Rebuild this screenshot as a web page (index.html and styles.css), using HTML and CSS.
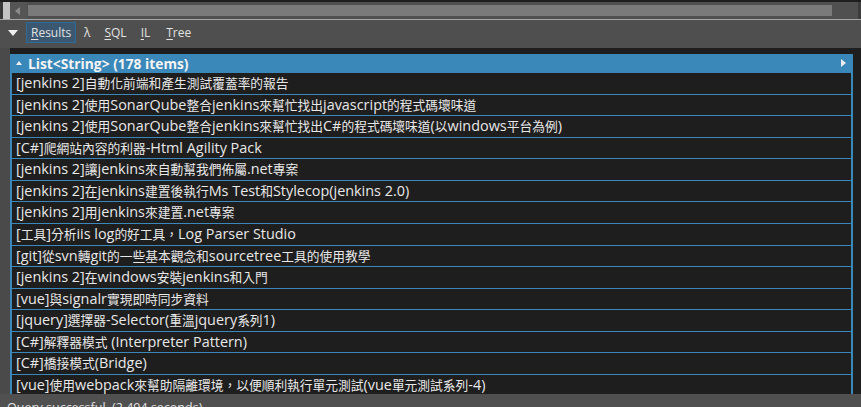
FILE: index.html
```html
<!DOCTYPE html>
<html>
<head>
<meta charset="utf-8">
<link rel="stylesheet" href="styles.css">
</head>
<body>
<div class="topstrip"></div>
<div class="hscroll">
  <div class="m-dark"></div>
  <div class="m-light"></div>
  <div class="arrowbtn"><span class="larrow"></span></div>
  <div class="track"><div class="thumb"></div></div>
  <div class="m-end"></div>
</div>
<div class="sep"></div>
<div class="toolbar">
  <span class="collapse"></span>
  <span class="btn-sel"><u>R</u>esults</span>
  <span class="tab t-lambda">λ</span>
  <span class="tab"><u>S</u>QL</span>
  <span class="tab"><u>I</u>L</span>
  <span class="tab t-tree"><u>T</u>ree</span>
</div>
<div class="main">
  <div class="leftstrip"></div>
  <div class="content">
    <div class="list">
      <div class="header">
        <span class="up"></span>
        <span class="htitle">List&lt;String&gt; (178 items)</span>
        <span class="right"></span>
      </div>
      <div class="row">[jenkins 2]<span class="c">自動化前端和產生測試覆蓋率的報告</span></div>
      <div class="row">[jenkins 2]<span class="c">使用</span>SonarQube<span class="c">整合</span>jenkins<span class="c">來幫忙找出</span>javascript<span class="c">的程式碼壞味道</span></div>
      <div class="row">[jenkins 2]<span class="c">使用</span>SonarQube<span class="c">整合</span>jenkins<span class="c">來幫忙找出</span>C#<span class="c">的程式碼壞味道</span>(<span class="c">以</span>windows<span class="c">平台為例</span>)</div>
      <div class="row">[C#]<span class="c">爬網站內容的利器</span>-Html Agility Pack</div>
      <div class="row">[jenkins 2]<span class="c">讓</span>jenkins<span class="c">來自動幫我們佈屬</span>.net<span class="c">專案</span></div>
      <div class="row">[jenkins 2]<span class="c">在</span>jenkins<span class="c">建置後執行</span>Ms Test<span class="c">和</span>Stylecop(jenkins 2.0)</div>
      <div class="row">[jenkins 2]<span class="c">用</span>jenkins<span class="c">來建置</span>.net<span class="c">專案</span></div>
      <div class="row">[<span class="c">工具</span>]<span class="c">分析</span>iis log<span class="c">的好工具，</span>Log Parser Studio</div>
      <div class="row">[git]<span class="c">從</span>svn<span class="c">轉</span>git<span class="c">的一些基本觀念和</span>sourcetree<span class="c">工具的使用教學</span></div>
      <div class="row">[jenkins 2]<span class="c">在</span>windows<span class="c">安裝</span>jenkins<span class="c">和入門</span></div>
      <div class="row">[vue]<span class="c">與</span>signalr<span class="c">實現即時同步資料</span></div>
      <div class="row">[jquery]<span class="c">選擇器</span>-Selector(<span class="c">重溫</span>jquery<span class="c">系列</span>1)</div>
      <div class="row">[C#]<span class="c">解釋器模式</span> (Interpreter Pattern)</div>
      <div class="row">[C#]<span class="c">橋接模式</span>(Bridge)</div>
      <div class="row">[vue]<span class="c">使用</span>webpack<span class="c">來幫助隔離環境，以便順利執行單元測試</span>(vue<span class="c">單元測試系列</span>-4)</div>
    </div>
  </div>
</div>
<div class="status">Query successful&nbsp; (2.494 seconds)</div>
</body>
</html>
```

FILE: styles.css
```css
html, body {
  margin: 0;
  padding: 0;
}
body {
  width: 861px;
  height: 407px;
  overflow: hidden;
  background: #1e1e1e;
  font-family: "Open Sans", "Noto Sans CJK TC", sans-serif;
  color: #e6e6e6;
  display: flex;
  flex-direction: column;
}
.topstrip {
  height: 2px;
  background: #1e1e1e;
  flex: none;
}
.hscroll {
  height: 17px;
  flex: none;
  display: flex;
  background: #505050;
}
.m-dark {
  width: 3px;
  background: #3a3a3a;
}
.m-light {
  width: 7px;
  background: #c4c4c4;
}
.arrowbtn {
  width: 17px;
  background: #555555;
  display: flex;
  align-items: center;
  justify-content: center;
}
.larrow {
  width: 0;
  height: 0;
  border-top: 4px solid transparent;
  border-bottom: 4px solid transparent;
  border-right: 5px solid #8c8c8c;
  margin-left: -2px;
}
.track {
  flex: 1;
  padding: 3px 0 3px 1px;
  display: flex;
}
.thumb {
  width: 804px;
  background: #7a7a7a;
}
.m-end {
  width: 3px;
  background: #3c3c3c;
}
.sep {
  height: 1px;
  flex: none;
  background: #a6a6a6;
}
.toolbar {
  height: 28px;
  flex: none;
  background: #4f4f4f;
  display: flex;
  align-items: flex-start;
  padding-top: 2px;
  box-sizing: border-box;
  font-size: 12px;
  color: #e2e2e2;
}
.collapse {
  width: 0;
  height: 0;
  margin: 8px 0 0 8px;
  border-left: 5px solid transparent;
  border-right: 5px solid transparent;
  border-top: 6px solid #f0f0f0;
}
.btn-sel {
  margin-left: 8px;
  height: 21px;
  box-sizing: border-box;
  padding: 0 4px;
  width: 50px;
  line-height: 19px;
  background: #3c5870;
  border: 1px solid #2c6a98;
}
.tab {
  margin-left: 14px;
  line-height: 21px;
}
.t-lambda {
  margin-left: 8px;
}
.t-tree {
  margin-left: 16px;
}
u {
  text-underline-offset: 2px;
}
.main {
  height: 346px;
  flex: none;
  display: flex;
  overflow: hidden;
}
.leftstrip {
  width: 10px;
  flex: none;
  background: #4a4a4a;
}
.content {
  flex: 1;
  padding: 6px 8px 0 0;
  min-width: 0;
}
.list {
  background: #3a88b9;
  padding: 0 2px;
  display: flex;
  flex-direction: column;
  gap: 1px;
}
.header {
  height: 18px;
  margin: 0 -2px;
  display: flex;
  align-items: center;
  padding-left: 6px;
  font-weight: bold;
  font-size: 13.8px;
  color: #f4f4f4;
}
.up {
  width: 0;
  height: 0;
  border-left: 3px solid transparent;
  border-right: 3px solid transparent;
  border-bottom: 4px solid #f0f0f0;
  margin-right: 6px;
}
.htitle {
  flex: 1;
}
.right {
  width: 0;
  height: 0;
  border-top: 4px solid transparent;
  border-bottom: 4px solid transparent;
  border-left: 5px solid #eeeeee;
  margin-right: 7px;
}
.row {
  height: 20.57px;
  line-height: 20.57px;
  background: #1e1e1e;
  padding-left: 4px;
  font-size: 14.4px;
  white-space: nowrap;
  color: #e8e8e8;
  flex: none;
}
.c {
  font-size: 0.885em;
}
.status {
  flex: 1;
  background: #505050;
  font-size: 12.5px;
  color: #e0e0e0;
  padding: 5px 0 0 7px;
  white-space: nowrap;
}
```
